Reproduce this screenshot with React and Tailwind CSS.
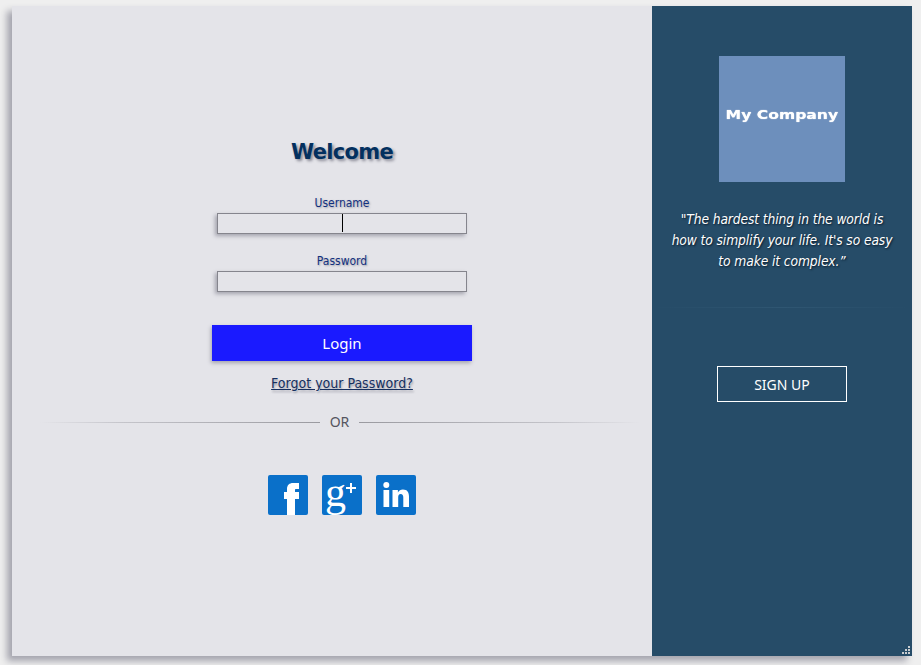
export default function App() {
  return (
    <div className="w-[921px] h-[665px] bg-[#efefef] pt-[6px] pl-[12px] overflow-hidden font-['Noto_Sans',sans-serif]">
      <div className="relative w-[900px] h-[650px] flex shadow-[-5px_5px_7px_#a3a3ad]">

        {/* Login side */}
        <div className="w-[640px] bg-[#e4e4e9] flex flex-col items-center pt-[131px] pl-[20px]">
          <h1 className="h-[30px] leading-[30px] text-[21px] font-bold text-[#03305f] font-['DejaVu_Sans',sans-serif] tracking-[-0.7px] [text-shadow:2px_2px_3px_#8a8a96]">
            Welcome
          </h1>

          <label className="mt-[27px] h-[19px] leading-[18px] text-[12px] font-['DejaVu_Sans',sans-serif] [font-stretch:condensed] text-[#12307e] [text-shadow:1px_1px_2px_#a0a0aa]">Username</label>
          <div className="relative w-[250px] h-[21px] border border-[#85858d] shadow-[-2px_2px_4px_#a3a3ad]">
            <span className="absolute left-[124px] top-0 w-px h-[18px] bg-black" />
          </div>

          <label className="mt-[18px] h-[19px] leading-[18px] text-[12px] font-['DejaVu_Sans',sans-serif] [font-stretch:condensed] text-[#12307e] [text-shadow:1px_1px_2px_#a0a0aa]">Password</label>
          <div className="w-[250px] h-[21px] border border-[#85858d] shadow-[-2px_2px_4px_#a3a3ad]" />

          <button className="mt-[33px] w-[260px] h-[36px] bg-[#1a1aff] text-white text-[15px] shadow-[-1px_2px_4px_#a3a3ad]">
            Login
          </button>

          <a className="mt-[12px] h-[20px] leading-[20px] text-[14px] font-['DejaVu_Sans',sans-serif] [font-stretch:condensed] text-[#17305f] underline [text-shadow:1px_2px_2px_#a0a0aa]">
            Forgot your Password?
          </a>

          <div className="mt-[19px] self-start -ml-[20px] w-[640px] flex items-center pl-[28px]">
            <div className="w-[280px] h-px bg-gradient-to-r from-transparent via-[#c4c4ca] via-30% to-[#9a9aa0]" />
            <span className="w-[39px] text-center text-[14px] leading-[20px] text-[#555560]">OR</span>
            <div className="w-[281px] h-px bg-gradient-to-l from-transparent via-[#c4c4ca] via-30% to-[#9a9aa0]" />
          </div>

          <div className="mt-[43px] flex gap-[14px]">
            <svg width="40" height="40" viewBox="0 0 40 40">
              <rect width="40" height="40" rx="2" fill="#0a70c9" />
              <path d="M19 40V24h-3v-7h3v-3c0-4 2.500-6 6-6h6v6h-3c-1 0-1 .5-1 1.500V17h4v7h-4v16z" fill="#fff" />
            </svg>
            <div className="relative w-[40px] h-[40px] rounded-[2px] bg-[#0a70c9]">
              <span className="absolute left-[3px] top-[-3px] text-[42px] leading-[40px] text-white font-['Liberation_Serif',serif]">g</span>
              <span className="absolute left-[24px] top-[12px] w-[10px] h-[2px] bg-white" />
              <span className="absolute left-[28px] top-[8px] w-[2px] h-[10px] bg-white" />
            </div>
            <svg width="40" height="40" viewBox="0 0 40 40">
              <rect width="40" height="40" rx="2" fill="#0a70c9" />
              <circle cx="10.300" cy="10" r="3" fill="#fff" />
              <rect x="7.500" y="15" width="5.700" height="17" fill="#fff" />
              <path d="M16.500 15h5.400v2.400c1-1.700 2.800-2.800 5-2.800 4.400 0 6.100 2.800 6.100 7V32h-5.700v-9.500c0-2.200-.8-3.400-2.600-3.400-1.900 0-2.500 1.500-2.500 3.400V32h-5.700z" fill="#fff" />
            </svg>
          </div>
        </div>

        {/* Sign up side */}
        <div className="w-[260px] bg-[#264c68] flex flex-col items-center pt-[50px]">
          <div className="w-[126px] h-[126px] pb-[8px] bg-[#6d8fbc] flex items-center justify-center">
            <span className="scale-x-[1.2] text-white text-[13px] font-bold whitespace-nowrap font-['DejaVu_Sans',sans-serif] [text-shadow:0_0_1px_#fff]">
              My Company
            </span>
          </div>
          <p className="mt-[27px] w-[226px] text-center text-[13.7px] leading-[21px] italic text-white font-['DejaVu_Sans',sans-serif] [font-stretch:condensed] tracking-[-0.1px] [text-shadow:1px_1px_2px_#0a1a2a]">
            "The hardest thing in the world is how to simplify your life. It's so easy to make it complex.”
          </p>
          <div className="mt-[35px] w-full h-px bg-gradient-to-r from-transparent via-[#2f5672] to-transparent" />
          <button className="mt-[58px] w-[130px] h-[36px] border border-white text-white text-[14px]">
            SIGN UP
          </button>
        </div>

        {/* Resize grip */}
        <svg className="absolute right-[2px] bottom-[2px]" width="8" height="8" viewBox="0 0 8 8" fill="#c8ccd0">
          <rect x="6" y="0" width="2" height="2" />
          <rect x="3" y="3" width="2" height="2" />
          <rect x="6" y="3" width="2" height="2" />
          <rect x="0" y="6" width="2" height="2" />
          <rect x="3" y="6" width="2" height="2" />
          <rect x="6" y="6" width="2" height="2" />
        </svg>
      </div>
    </div>
  )
}
